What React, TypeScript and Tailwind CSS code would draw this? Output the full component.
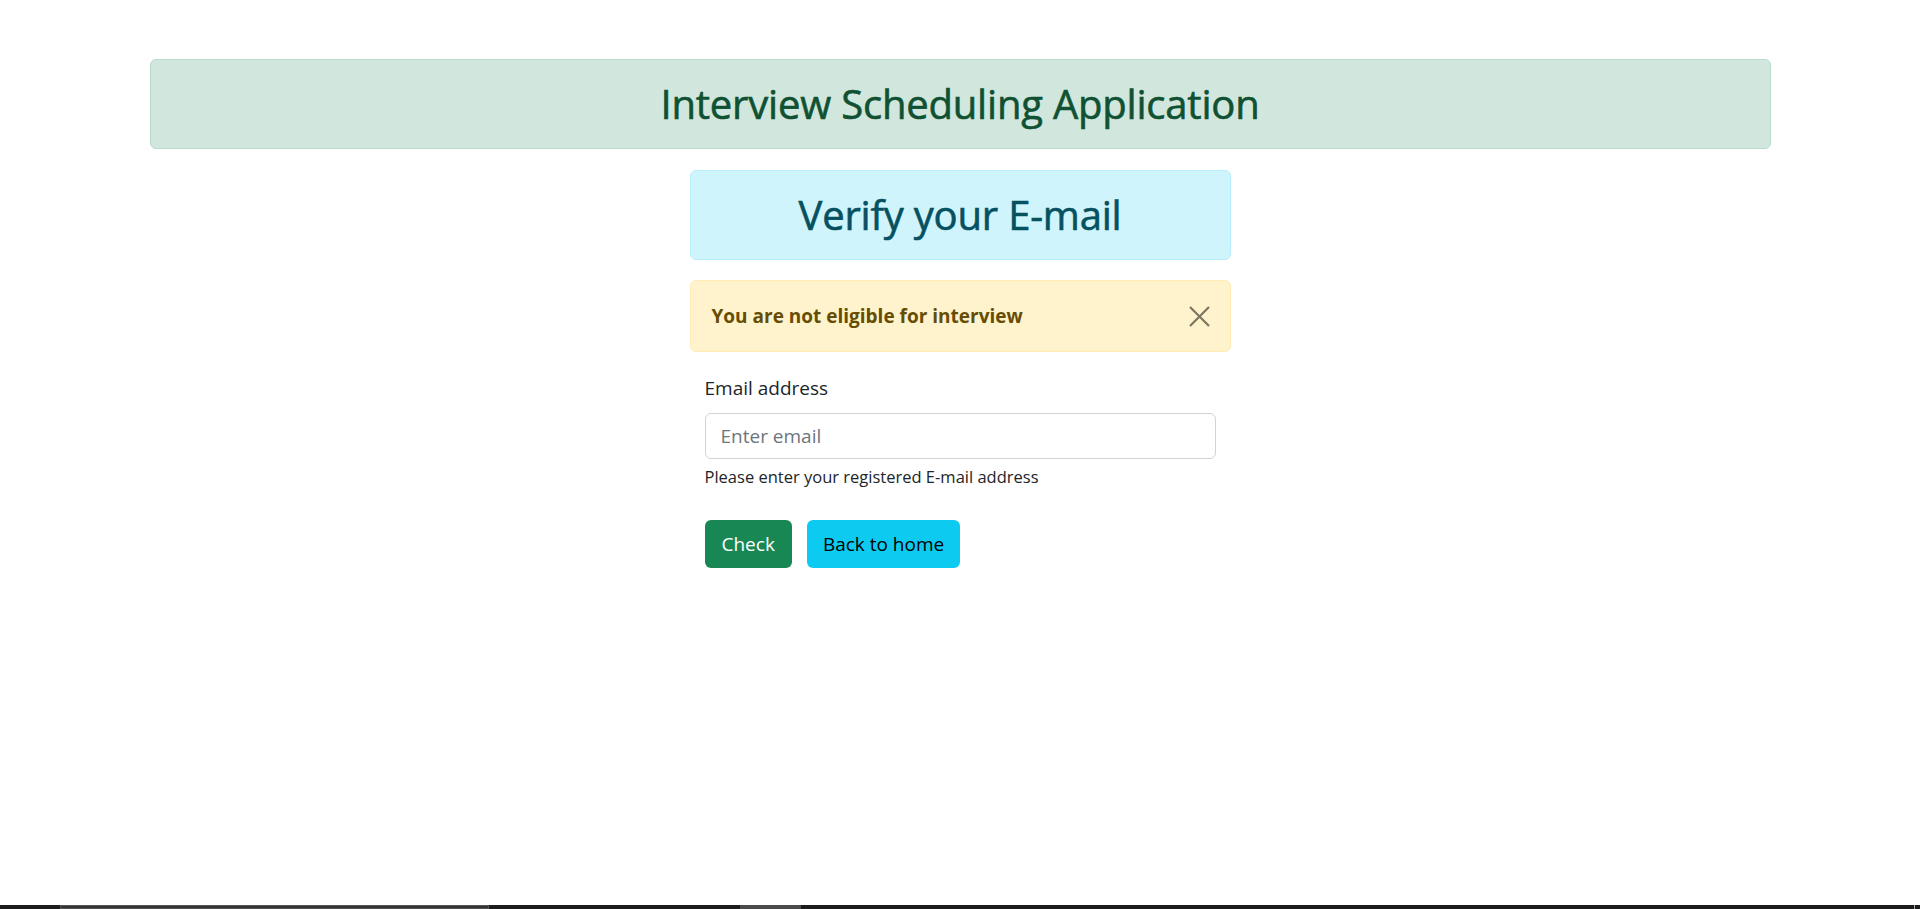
export default function App() {
  return (
    <div className="min-h-screen flex flex-col bg-white font-['Open_Sans',sans-serif] text-[#212529]">
      <div className="flex-1 pt-[59px]">
        <div className="mx-auto w-[1621px] h-[90px] flex items-center justify-center rounded-[6px] border border-[#badbcc] bg-[#d1e7dd]">
          <h1 className="text-[40px] leading-[48px] tracking-[-0.2px] [-webkit-text-stroke:0.6px_#0f5132] text-[#0f5132]">
            Interview Scheduling Application
          </h1>
        </div>

        <div className="mx-auto w-[541px] mt-[21px]">
          <div className="h-[90px] flex items-center justify-center rounded-[6px] border border-[#b6effb] bg-[#cff4fc]">
            <h1 className="text-[40px] leading-[48px] tracking-[-0.2px] [-webkit-text-stroke:0.6px_#055160] text-[#055160]">
              Verify your E-mail
            </h1>
          </div>

          <div className="mt-[20px] h-[72px] flex items-center justify-between rounded-[6px] border border-[#ffecb5] bg-[#fff3cd] pl-[21px] pr-[20px]">
            <span className="text-[19px] font-bold text-[#664d03]">You are not eligible for interview</span>
            <button className="w-[21px] h-[21px] text-[#7d7761]">
              <svg viewBox="0 0 21 21" width="21" height="21" fill="none" stroke="currentColor" strokeWidth="2.2">
                <path d="M1 1L20 20M20 1L1 20" />
              </svg>
            </button>
          </div>

          <form className="px-[15px] mt-[21px]">
            <label className="block text-[19px] leading-[30px]">Email address</label>
            <input
              type="email"
              placeholder="Enter email"
              className="mt-[10px] block w-full h-[46px] rounded-[6px] border border-[#ced4da] px-[15px] text-[19px] placeholder:text-[#6c757d] outline-none"
            />
            <p className="mt-[5px] text-[16.5px] leading-[26px]">Please enter your registered E-mail address</p>
            <div className="mt-[30px] flex gap-[15px]">
              <button type="button" className="h-[48px] px-[17px] rounded-[6px] bg-[#198754] text-white text-[19px]">
                Check
              </button>
              <button type="button" className="h-[48px] px-[16px] rounded-[6px] bg-[#0dcaf0] text-black text-[19px]">
                Back to home
              </button>
            </div>
          </form>
        </div>
      </div>

      <div className="h-[4px] flex bg-[#1c1c1c]">
        <div className="w-[60px]" />
        <div className="w-[429px] bg-[#333] border border-[#555]" />
        <div className="w-[251px]" />
        <div className="w-[61px] bg-[#4a4a4a]" />
        <div className="w-[1113px]" />
        <div className="w-[1px] bg-[#aaa]" />
      </div>
    </div>
  )
}
